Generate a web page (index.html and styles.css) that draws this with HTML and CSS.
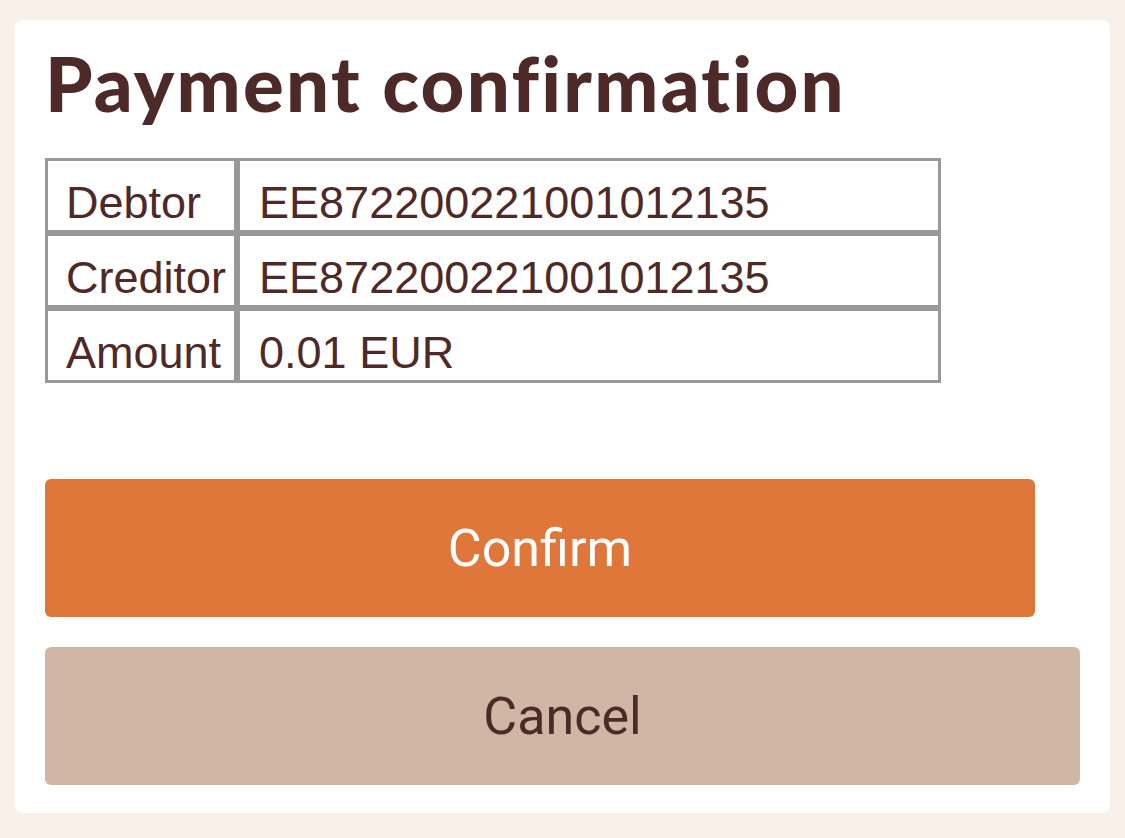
FILE: index.html
```html
<!DOCTYPE html>
<html lang="en">
<head>
    <meta charset="UTF-8">
    <meta name="viewport" content="width=device-width, initial-scale=1.0">
    <title>Payment confirmation</title>
    <link rel="stylesheet" href="styles.css">
</head>
<body>
    <main class="card">
        <h1>Payment confirmation</h1>
        <table class="details">
            <tr>
                <td class="label">Debtor</td>
                <td>EE872200221001012135</td>
            </tr>
            <tr>
                <td class="label">Creditor</td>
                <td>EE872200221001012135</td>
            </tr>
            <tr>
                <td class="label">Amount</td>
                <td>0.01 EUR</td>
            </tr>
        </table>
        <div class="actions">
            <button type="button" class="btn btn-confirm">Confirm</button>
            <button type="button" class="btn btn-cancel">Cancel</button>
        </div>
    </main>
</body>
</html>
```

FILE: styles.css
```css
:root {
    --page-bg: #f8f0e9;
    --card-bg: #ffffff;
    --text-color: #4d2a28;
    --table-border: #999999;
    --confirm-bg: #df773a;
    --cancel-bg: #d0b7a5;
}

body {
    margin: 0;
    padding: 20px 15px 25px 15px;
    background-color: var(--page-bg);
    color: var(--text-color);
    font-family: 'Liberation Sans', Arial, sans-serif;
}

.card {
    background-color: var(--card-bg);
    border-radius: 8px;
    padding: 18px 30px 28px 30px;
}

h1 {
    margin: 0 0 30px 0;
    font-family: 'Lato', sans-serif;
    font-weight: 900;
    font-size: 76px;
    line-height: 90px;
    letter-spacing: 2.3px;
    font-variant-ligatures: none;
    color: var(--text-color);
}

.details {
    width: 896px;
    border-collapse: separate;
    border-spacing: 0;
    font-size: 45px;
    line-height: 50px;
}

.details td {
    border: 3px solid var(--table-border);
    padding: 17px 10px 2px 19px;
    vertical-align: top;
}

.details td.label {
    width: 1px;
    padding-left: 18px;
    padding-right: 8px;
    white-space: nowrap;
}

.actions {
    margin-top: 96px;
    display: flex;
    flex-direction: column;
    gap: 30px;
}

.btn {
    display: block;
    height: 138px;
    border: none;
    border-radius: 6px;
    font-family: 'Roboto', sans-serif;
    font-size: 52px;
    cursor: pointer;
}

.btn-confirm {
    background-color: var(--confirm-bg);
    color: #ffffff;
    width: 990px;
}

.btn-cancel {
    background-color: var(--cancel-bg);
    color: var(--text-color);
    width: 100%;
}
```
